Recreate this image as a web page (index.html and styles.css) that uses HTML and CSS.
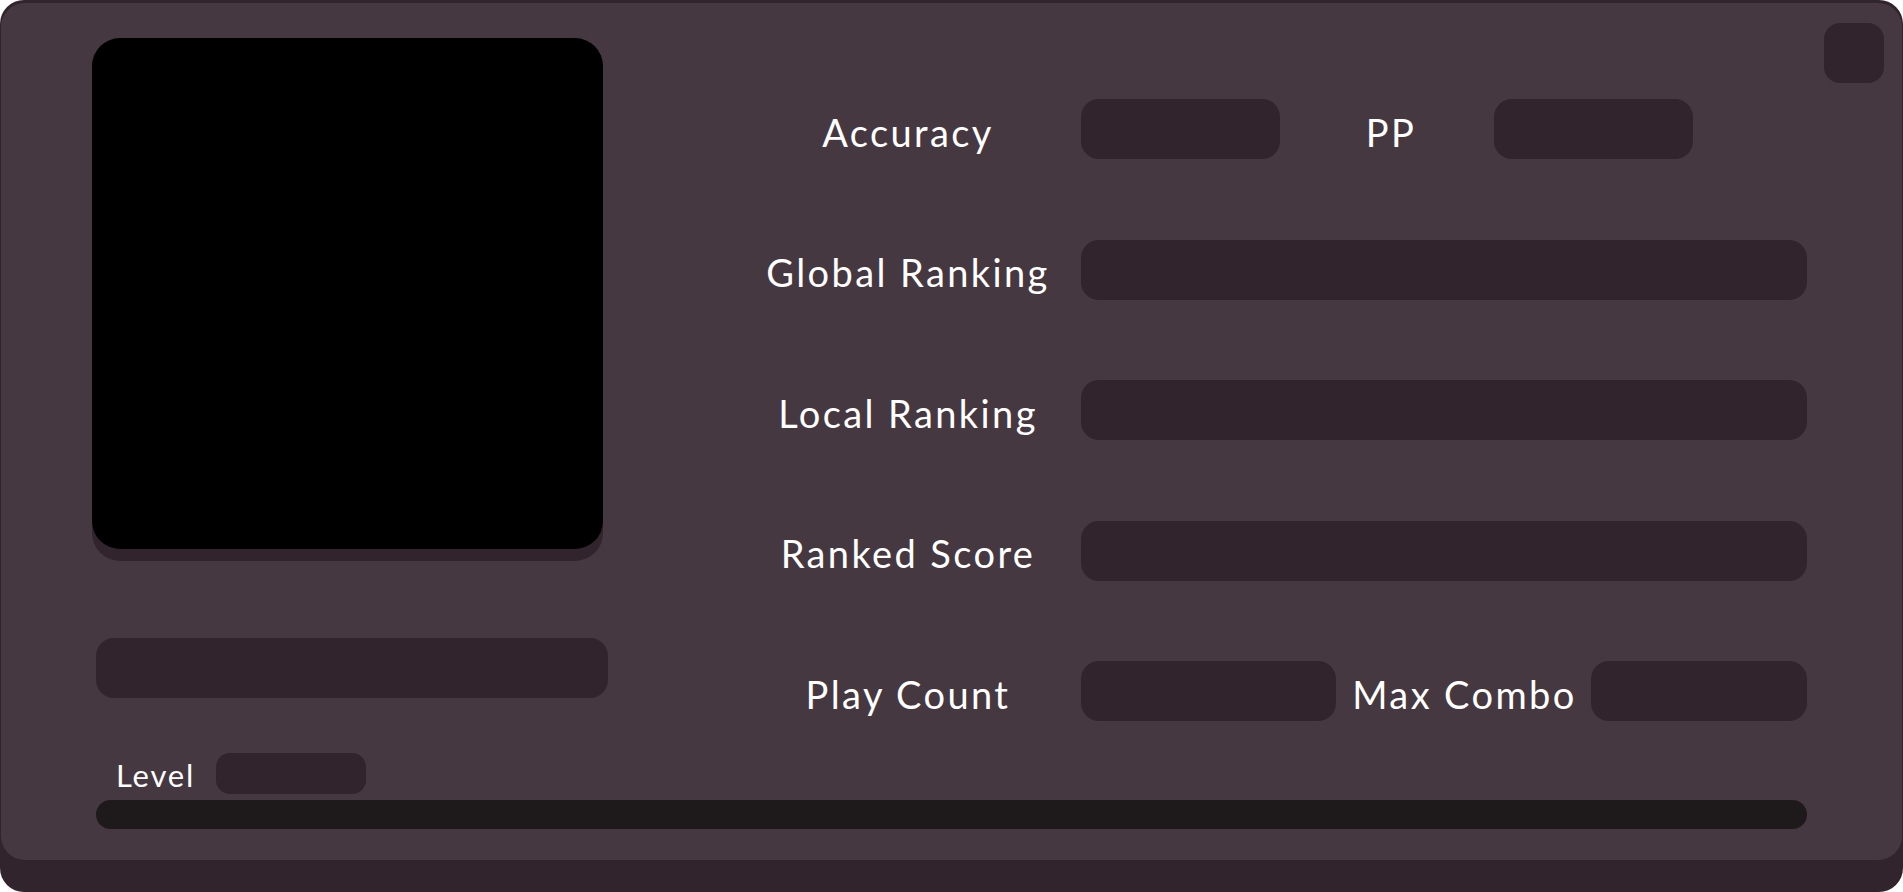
FILE: index.html
```html
<!DOCTYPE html>
<html lang="en">
<head>
<meta charset="utf-8">
<title>Profile</title>
<link rel="stylesheet" href="styles.css">
</head>
<body>
<div class="card">
  <div class="inner">
    <div class="close"></div>
    <div class="top">
      <div class="left">
        <div class="avatar"></div>
        <div class="name"></div>
        <div class="level-row">
          <span class="level-label">Level</span>
          <div class="level-box"></div>
        </div>
      </div>
      <div class="right">
        <div class="row">
          <span class="label">Accuracy</span>
          <div class="field w199"></div>
          <span class="label mid pp">PP</span>
          <div class="field w199"></div>
        </div>
        <div class="row">
          <span class="label">Global Ranking</span>
          <div class="field grow"></div>
        </div>
        <div class="row">
          <span class="label">Local Ranking</span>
          <div class="field grow"></div>
        </div>
        <div class="row">
          <span class="label">Ranked Score</span>
          <div class="field grow"></div>
        </div>
        <div class="row">
          <span class="label">Play Count</span>
          <div class="field w255"></div>
          <span class="label mid combo">Max Combo</span>
          <div class="field w216"></div>
        </div>
      </div>
    </div>
    <div class="bar"></div>
  </div>
</div>
</body>
</html>
```
FILE: styles.css
```css
html, body {
  margin: 0;
  padding: 0;
  background: #ffffff;
  overflow: hidden;
}

body {
  font-family: "Lato", "Noto Sans", sans-serif;
  color: #ffffff;
}

.card {
  width: 1903px;
  box-sizing: border-box;
  background: #32242c;
  border-radius: 24px;
  padding: 3px 1px 32px 1px;
}

.inner {
  position: relative;
  background: #463840;
  border-radius: 24px;
  padding: 35px 95px 31px 91px;
  display: flex;
  flex-direction: column;
}

.close {
  position: absolute;
  top: 20px;
  right: 18px;
  width: 60px;
  height: 60px;
  border-radius: 16px;
  background: #32242c;
}

.top {
  display: flex;
  align-items: flex-start;
}

.left {
  width: 516px;
  display: flex;
  flex-direction: column;
}

.avatar {
  width: 511px;
  height: 511px;
  background: #000000;
  border-radius: 28px;
  box-shadow: 0 12px 0 #32242c;
}

.name {
  margin-top: 89px;
  margin-left: 4px;
  width: 512px;
  height: 60px;
  border-radius: 18px;
  background: #32242c;
}

.level-row {
  margin-top: 55px;
  height: 41px;
  display: flex;
  align-items: center;
}

.level-label {
  margin-left: 24px;
  width: 100px;
  font-size: 31px;
  letter-spacing: 1.8px;
  padding-top: 2px;
}

.level-box {
  width: 150px;
  height: 41px;
  border-radius: 14px;
  background: #32242c;
}

.right {
  margin-left: 145px;
  flex: 1;
  padding-top: 61px;
  display: flex;
  flex-direction: column;
  gap: 80.5px;
}

.row {
  display: flex;
  align-items: center;
  height: 60px;
}

.label {
  width: 310px;
  margin-right: 18px;
  text-align: center;
  font-size: 38px;
  letter-spacing: 2.4px;
  white-space: nowrap;
  line-height: 1;
  padding-top: 5px;
}

.label.mid {
  margin-right: 0;
}

.label.pp {
  width: 214px;
  padding-left: 8px;
  box-sizing: border-box;
}

.label.combo {
  width: 255px;
  padding-left: 2px;
  box-sizing: border-box;
}

.field {
  height: 60px;
  border-radius: 18px;
  background: #32242c;
}

.w199 { width: 199px; }
.w255 { width: 255px; }
.w216 { width: 216px; }
.grow { flex: 1; }

.bar {
  margin-top: 6px;
  margin-left: 4px;
  height: 29px;
  border-radius: 15px;
  background: #1e1a1c;
}
```
